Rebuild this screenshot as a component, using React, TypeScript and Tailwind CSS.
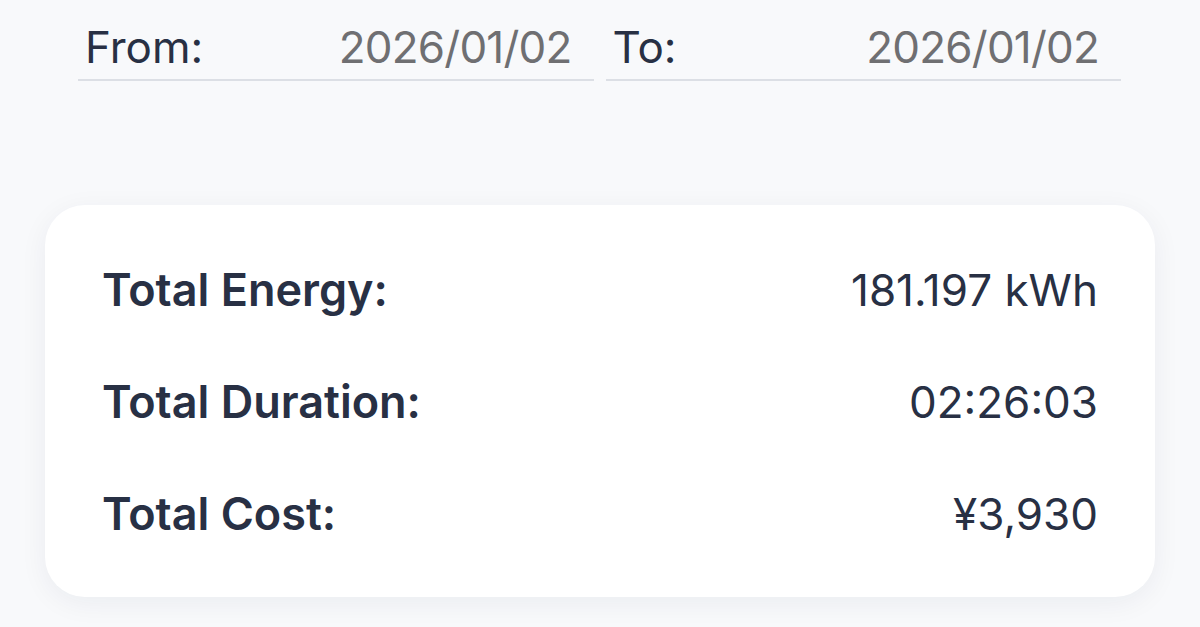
import React from "react";

const rows = [
	{ label: "Total Energy:", value: "181.197 kWh" },
	{ label: "Total Duration:", value: "02:26:03" },
	{ label: "Total Cost:", value: "¥3,930" },
];

const DateField = ({ label, value }: { label: string; value: string }) => {
	return (
		<div className="flex-1 flex items-center justify-between border-b-2 border-[#dcdfe5] pb-[6px] pl-[7px] pr-[22px] mt-[1px]">
			<span className="text-[44px] leading-[52px] text-[#283044]">{label}</span>
			<span className="text-[44px] leading-[52px] tracking-[-0.8px] text-[#6f6f72]">
				{value}
			</span>
		</div>
	);
};

export default function App() {
	return (
		<div
			className="min-h-screen w-full bg-[#f8f9fb] pt-[20px]"
			style={{ fontFamily: "Inter, 'Noto Sans', sans-serif" }}
		>
			<div className="flex gap-[12px] ml-[78px] mr-[79px]">
				<DateField label="From:" value="2026/01/02" />
				<DateField label="To:" value="2026/01/02" />
			</div>

			<div className="mt-[124px] mx-[45px] bg-white rounded-[40px] shadow-[0_6px_28px_rgba(20,30,60,0.06)] pt-[59px] pb-[57px] pl-[57px] pr-[57px] flex flex-col gap-[60px]">
				{rows.map((row) => (
					<div key={row.label} className="flex items-center justify-between">
						<span className="text-[45px] leading-[52px] font-semibold text-[#283044]">
							{row.label}
						</span>
						<span className="text-[44px] leading-[52px] text-[#283044]">
							{row.value}
						</span>
					</div>
				))}
			</div>
		</div>
	);
}
